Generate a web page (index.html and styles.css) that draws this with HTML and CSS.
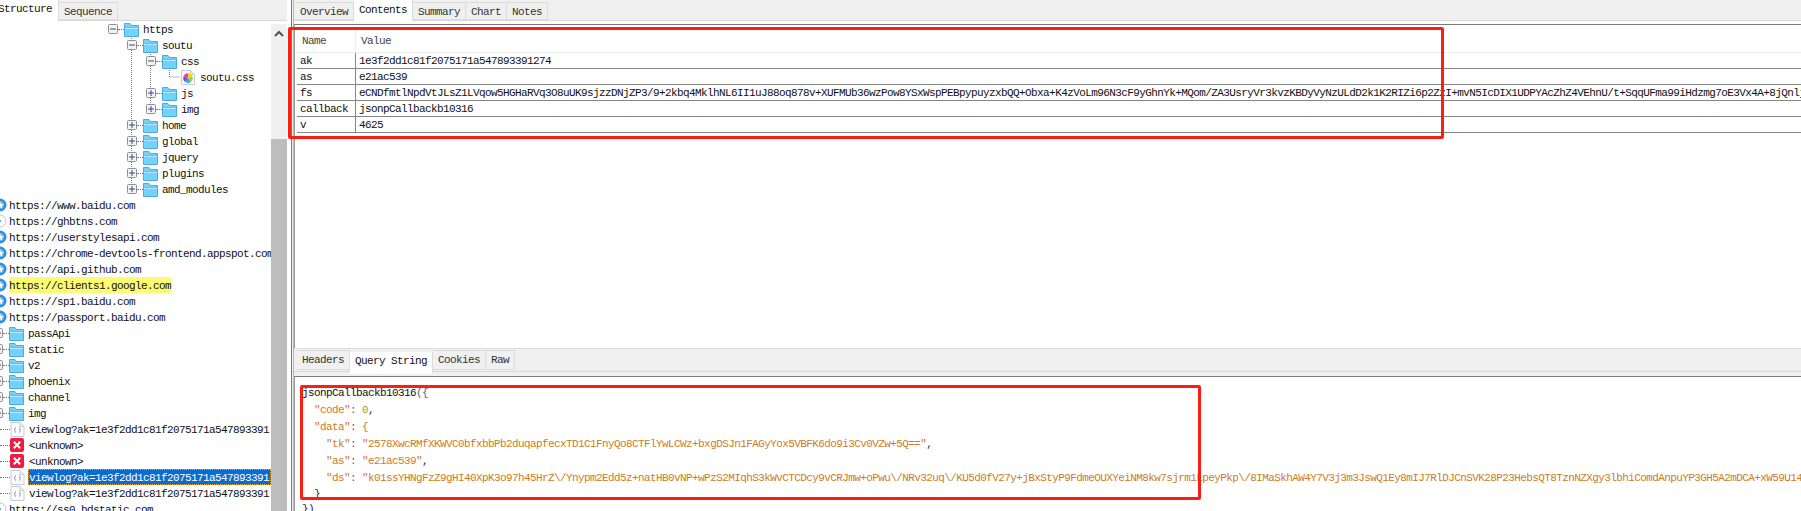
FILE: index.html
```html
<!DOCTYPE html>
<html lang="en">
<head>
<meta charset="utf-8">
<title>Charles session</title>
<link rel="stylesheet" href="styles.css">
</head>
<body>
<svg class="defs" width="0" height="0" aria-hidden="true">
  <symbol id="folder" viewBox="0 0 15 15"><path d="M.5 14.5V1.5h5.500l1.500 2h7v11z" fill="#72d2fb" stroke="#4cabdd"/><path d="M1 5.500h13" stroke="#4cabdd" stroke-opacity=".45"/><path d="M1 6.500h13" stroke="#b6e9ff"/></symbol>
  <symbol id="minus" viewBox="0 0 10 10"><rect x=".5" y=".5" width="9" height="9" rx="1" fill="#f4f4f4" stroke="#8f8f8f"/><path d="M2 5h6" stroke="#35507f"/></symbol>
  <symbol id="plus" viewBox="0 0 10 10"><rect x=".5" y=".5" width="9" height="9" rx="1" fill="#f4f4f4" stroke="#8f8f8f"/><path d="M2 5h6M5 2v6" stroke="#2d4a8a"/></symbol>
  <symbol id="globe" viewBox="0 0 14 14"><circle cx="7" cy="7" r="6.500" fill="#2b8fe6"/><circle cx="7" cy="7" r="4" fill="#6db9f4"/><path d="M7 3.200l1.100 2.500 2.700.2-2 1.800.6 2.700L7 9l-2.400 1.400.6-2.700-2-1.800 2.700-.2z" fill="#fff"/></symbol>
  <symbol id="globe-idle" viewBox="0 0 14 14"><circle cx="7" cy="7" r="6" fill="#fff" stroke="#bcc6d0"/><path d="M4 7h4" stroke="#2b8fe6" stroke-width="1.500"/></symbol>
  <symbol id="style" viewBox="0 0 14 15"><path d="M.5.5h9l4 4v10H.5z" fill="#fafafa" stroke="#c6cad4"/><path d="M9.500.5v4h4" fill="#e4e6ec" stroke="#c6cad4"/><path d="M7 8V3.200A4.800 4.800 0 0 1 11.500 6.500z" fill="#f7d21e"/><path d="M7 8l4.500-1.500A4.800 4.800 0 0 1 10 11.800z" fill="#9ad92a"/><path d="M7 8l3 3.800A4.800 4.800 0 0 1 4 11.800z" fill="#27b6dc"/><path d="M7 8l-3 3.800A4.800 4.800 0 0 1 2.500 6.500z" fill="#8d3fe0"/><path d="M7 8L2.500 6.500A4.800 4.800 0 0 1 7 3.200z" fill="#ef3fa0"/></symbol>
  <symbol id="page" viewBox="0 0 14 15"><path d="M.5.5h9l4 4v10H.5z" fill="#fbfbfd" stroke="#c8cbd6"/><path d="M9.500.5v4h4" fill="#e8eaf0" stroke="#c8cbd6"/><path d="M5.500 5.500c-1.500 0-.5 2.500-1.500 2.500 1 0 0 2.500 1.500 2.500M8.500 5.500c1.500 0 .5 2.500 1.500 2.500-1 0 0 2.500-1.500 2.500" fill="none" stroke="#8d93a3"/></symbol>
  <symbol id="error" viewBox="0 0 14 14"><rect width="14" height="14" rx="2" fill="#ee1c3e"/><path d="M3.800 3.800l6.400 6.400M10.200 3.800l-6.400 6.400" stroke="#fff" stroke-width="2"/></symbol>
</svg>

<div class="app">
  <aside class="left">
    <nav class="tabs left-tabs">
      <span class="tab tab-on tab-structure">Structure</span>
      <span class="tab">Sequence</span>
    </nav>
    <div class="left-body">
      <div class="tree">
        <svg class="guides" width="270" height="490" aria-hidden="true">
          <path d="M131.500 15V168M150.500 31V88M169.500 47V56H180" fill="none" stroke="#777" stroke-dasharray="1 1"/>
        </svg>
        <div class="rows">
          <div class="row d1"><svg class="exp"><use href="#minus"/></svg><i class="dots"></i><svg class="ic"><use href="#folder"/></svg><span class="t">https</span></div>
          <div class="row d2"><svg class="exp"><use href="#minus"/></svg><i class="dots"></i><svg class="ic"><use href="#folder"/></svg><span class="t">soutu</span></div>
          <div class="row d3"><svg class="exp"><use href="#minus"/></svg><i class="dots"></i><svg class="ic"><use href="#folder"/></svg><span class="t">css</span></div>
          <div class="row d4"><svg class="ic ic-file"><use href="#style"/></svg><span class="t t-file">soutu.css</span></div>
          <div class="row d3"><svg class="exp"><use href="#plus"/></svg><i class="dots"></i><svg class="ic"><use href="#folder"/></svg><span class="t">js</span></div>
          <div class="row d3"><svg class="exp"><use href="#plus"/></svg><i class="dots"></i><svg class="ic"><use href="#folder"/></svg><span class="t">img</span></div>
          <div class="row d2"><svg class="exp"><use href="#plus"/></svg><i class="dots"></i><svg class="ic"><use href="#folder"/></svg><span class="t">home</span></div>
          <div class="row d2"><svg class="exp"><use href="#plus"/></svg><i class="dots"></i><svg class="ic"><use href="#folder"/></svg><span class="t">global</span></div>
          <div class="row d2"><svg class="exp"><use href="#plus"/></svg><i class="dots"></i><svg class="ic"><use href="#folder"/></svg><span class="t">jquery</span></div>
          <div class="row d2"><svg class="exp"><use href="#plus"/></svg><i class="dots"></i><svg class="ic"><use href="#folder"/></svg><span class="t">plugins</span></div>
          <div class="row d2"><svg class="exp"><use href="#plus"/></svg><i class="dots"></i><svg class="ic"><use href="#folder"/></svg><span class="t">amd_modules</span></div>
          <div class="row"><svg class="ic-host"><use href="#globe"/></svg><span class="t">https://www.baidu.com</span></div>
          <div class="row"><svg class="ic-host"><use href="#globe-idle"/></svg><span class="t">https://ghbtns.com</span></div>
          <div class="row"><svg class="ic-host"><use href="#globe"/></svg><span class="t">https://userstylesapi.com</span></div>
          <div class="row"><svg class="ic-host"><use href="#globe"/></svg><span class="t">https://chrome-devtools-frontend.appspot.com</span></div>
          <div class="row"><svg class="ic-host"><use href="#globe"/></svg><span class="t">https://api.github.com</span></div>
          <div class="row"><svg class="ic-host"><use href="#globe"/></svg><span class="t t-mark">https://clients1.google.com</span></div>
          <div class="row"><svg class="ic-host"><use href="#globe"/></svg><span class="t">https://sp1.baidu.com</span></div>
          <div class="row"><svg class="ic-host"><use href="#globe"/></svg><span class="t">https://passport.baidu.com</span></div>
          <div class="row"><svg class="exp"><use href="#plus"/></svg><i class="dots"></i><svg class="ic"><use href="#folder"/></svg><span class="t">passApi</span></div>
          <div class="row"><svg class="exp"><use href="#plus"/></svg><i class="dots"></i><svg class="ic"><use href="#folder"/></svg><span class="t">static</span></div>
          <div class="row"><svg class="exp"><use href="#plus"/></svg><i class="dots"></i><svg class="ic"><use href="#folder"/></svg><span class="t">v2</span></div>
          <div class="row"><svg class="exp"><use href="#plus"/></svg><i class="dots"></i><svg class="ic"><use href="#folder"/></svg><span class="t">phoenix</span></div>
          <div class="row"><svg class="exp"><use href="#plus"/></svg><i class="dots"></i><svg class="ic"><use href="#folder"/></svg><span class="t">channel</span></div>
          <div class="row"><svg class="exp"><use href="#plus"/></svg><i class="dots"></i><svg class="ic"><use href="#folder"/></svg><span class="t">img</span></div>
          <div class="row leaf"><i class="dots"></i><svg class="ic"><use href="#page"/></svg><span class="t">viewlog?ak=1e3f2dd1c81f2075171a547893391</span></div>
          <div class="row leaf"><i class="dots"></i><svg class="ic ic-err"><use href="#error"/></svg><span class="t">&lt;unknown&gt;</span></div>
          <div class="row leaf"><i class="dots"></i><svg class="ic ic-err"><use href="#error"/></svg><span class="t">&lt;unknown&gt;</span></div>
          <div class="row leaf"><i class="dots"></i><svg class="ic"><use href="#page"/></svg><span class="t t-sel">viewlog?ak=1e3f2dd1c81f2075171a547893391</span></div>
          <div class="row leaf"><i class="dots"></i><svg class="ic"><use href="#page"/></svg><span class="t">viewlog?ak=1e3f2dd1c81f2075171a547893391</span></div>
          <div class="row"><svg class="ic-host"><use href="#globe-idle"/></svg><span class="t">https://ss0.bdstatic.com</span></div>
        </div>
      </div>
      <div class="scrollbar">
        <div class="track">
          <svg class="chev" width="10" height="7" aria-hidden="true"><path d="M1 6l4-4 4 4" fill="none" stroke="#555" stroke-width="2"/></svg>
        </div>
        <div class="thumb"></div>
      </div>
    </div>
  </aside>

  <div class="split"></div>

  <main class="right">
    <section class="pane-top">
      <nav class="tabs right-tabs">
        <span class="tab">Overview</span>
        <span class="tab tab-on">Contents</span>
        <span class="tab">Summary</span>
        <span class="tab">Chart</span>
        <span class="tab">Notes</span>
      </nav>
      <div class="sheet sheet-top">
        <table class="params">
          <colgroup><col class="col-name"><col></colgroup>
          <thead><tr><th>Name</th><th>Value</th></tr></thead>
          <tbody>
            <tr><td>ak</td><td>1e3f2dd1c81f2075171a547893391274</td></tr>
            <tr><td>as</td><td>e21ac539</td></tr>
            <tr><td>fs</td><td>eCNDfmtlNpdVtJLsZ1LVqow5HGHaRVq3O8uUK9sjzzDNjZP3/9+2kbq4MklhNL6II1uJ88oq878v+XUFMUb36wzPow8YSxWspPEBpypuyzxbQQ+Obxa+K4zVoLm96N3cF9yGhnYk+MQom/ZA3UsryVr3kvzKBDyVyNzULdD2k1K2RIZi6p2ZzI+mvN5IcDIX1UDPYAcZhZ4VEhnU/t+SqqUFma99iHdzmg7oE3Vx4A+8jQnlj</td></tr>
            <tr><td>callback</td><td>jsonpCallbackb10316</td></tr>
            <tr><td>v</td><td>4625</td></tr>
          </tbody>
        </table>
      </div>
    </section>

    <section class="pane-bottom">
      <nav class="tabs bottom-tabs">
        <span class="tab">Headers</span>
        <span class="tab tab-on">Query String</span>
        <span class="tab">Cookies</span>
        <span class="tab">Raw</span>
      </nav>
      <div class="sheet sheet-bottom">
        <div class="code">
          <div class="ln">jsonpCallbackb10316<span class="p">({</span></div>
          <div class="ln">  <span class="k">"code"</span><span class="p">:</span> <span class="n">0</span><span class="d">,</span></div>
          <div class="ln">  <span class="k">"data"</span><span class="p">:</span> <span class="k">{</span></div>
          <div class="ln">    <span class="k">"tk"</span><span class="p">:</span> <span class="k">"2578XwcRMfXKWVC0bfxbbPb2duqapfecxTD1C1FnyQo8CTFlYwLCWz+bxgDSJn1FAGyYox5VBFK6do9i3Cv0VZw+5Q=="</span><span class="d">,</span></div>
          <div class="ln">    <span class="k">"as"</span><span class="p">:</span> <span class="k">"e21ac539"</span><span class="d">,</span></div>
          <div class="ln">    <span class="k">"ds"</span><span class="p">:</span> <span class="k">"k01ssYHNgFzZ9gHI40XpK3o97h45HrZ\/Ynypm2Edd5z+natHB0vNP+wPzS2MIqhS3kWvCTCDcy9vCRJmw+oPwu\/NRv32uq\/KU5d0fV27y+jBxStyP9FdmeOUXYeiNM8kw7sjrm1LpeyPkp\/8IMaSkhAW4Y7V3j3m3JswQ1Ey8mIJ7RlDJCnSVK28P23HebsQT8TznNZXgy3lbhiComdAnpuYP3GH5A2mDCA+xW59U14</span></div>
          <div class="ln ln-tight">  <span class="d">}</span></div>
          <div class="ln ln-tight"><span class="d">})</span></div>
        </div>
      </div>
    </section>
  </main>

  <div class="mark mark-top"></div>
  <div class="mark mark-bottom"></div>
</div>
</body>
</html>
```

FILE: styles.css
```css
* { box-sizing: border-box; }

html, body {
  margin: 0;
  height: 511px;
  overflow: hidden;
  background: #fff;
}

body {
  font-family: "Liberation Mono", "Noto Sans CJK SC", monospace;
  font-size: 11px;
  letter-spacing: -0.6px;
  line-height: 16px;
  color: #111;
}

.defs { position: absolute; }

.app {
  position: relative;
  display: flex;
  width: 1801px;
  height: 511px;
  overflow: hidden;
}

/* ---------- tabs ---------- */
.tabs {
  display: flex;
  align-items: flex-start;
  background: #f0f0f0;
  border-bottom: 1px solid #d9d9d9;
  height: 21px;
  padding-top: 2px;
}

.tab {
  height: 18px;
  padding: 0 5px;
  line-height: 18px;
  color: #333;
  border: 1px solid #dcdcdc;
  border-left-width: 0;
  white-space: nowrap;
  flex: none;
}

.tab-on {
  height: 21px;
  margin-top: -2px;
  line-height: 20px;
  background: #fff;
  border-top-width: 0;
  border-bottom-width: 0;
  color: #111;
}

/* ---------- left pane ---------- */
.left {
  width: 291px;
  flex: none;
  display: flex;
  flex-direction: column;
}

.left-tabs { width: 287px; }

.tab-structure {
  margin-left: -2px;
  padding-left: 0;
  padding-right: 6px;
  line-height: 18px;
}

.left-body {
  display: flex;
  flex: 1;
  min-height: 0;
}

.tree {
  position: relative;
  width: 271px;
  flex: none;
  overflow: hidden;
  background: #fff;
}

.guides {
  position: absolute;
  left: 0;
  top: 0;
}

.rows {
  position: relative;
  margin-left: -7px;
}

.row {
  display: flex;
  align-items: center;
  height: 16px;
  white-space: nowrap;
}

.d1 { padding-left: 115px; }
.d2 { padding-left: 134px; }
.d3 { padding-left: 153px; }
.d4 { padding-left: 188px; }
.leaf { padding-left: 7px; }

.exp {
  width: 10px;
  height: 10px;
  flex: none;
}

.dots {
  width: 6px;
  height: 1px;
  flex: none;
  border-top: 1px dotted #777;
}

.leaf .dots { width: 10px; }

.ic {
  width: 15px;
  height: 15px;
  flex: none;
}

.ic-file { width: 14px; }
.ic-err { width: 14px; height: 14px; }

.ic-host {
  width: 14px;
  height: 14px;
  flex: none;
  margin-right: 2px;
}

.t {
  height: 16px;
  margin-left: 4px;
  line-height: 18px;
  color: #111;
}

.ic-host + .t { margin-left: 0; }
.ic-err + .t { margin-left: 5px; }
.t-file { margin-left: 5px; }

.t-mark {
  background: #fdfb72;
}

.t-sel {
  flex: 1;
  margin-left: 3px;
  padding-left: 1px;
  color: #fff;
  background: #0a6ccf;
  outline: 1px dotted #f2a13a;
  outline-offset: -1px;
}

.scrollbar {
  width: 16px;
  flex: none;
  display: flex;
  flex-direction: column;
  margin-top: 3px;
  background: #f0f0f0;
}

.track {
  height: 115px;
  flex: none;
  display: flex;
  justify-content: center;
  padding-top: 6px;
}

.chev { display: block; }

.thumb {
  flex: 1;
  background: #bdbdbd;
}

/* ---------- splitter ---------- */
.split {
  width: 3px;
  flex: none;
  background: #f0f0f0;
  border-left: 1px solid #7a7a7a;
  border-right: 1px solid #b8b8b8;
}

/* ---------- right pane ---------- */
.right {
  flex: 1;
  min-width: 0;
  display: flex;
  flex-direction: column;
}

.pane-top {
  height: 348px;
  flex: none;
  display: flex;
  flex-direction: column;
}

.right-tabs { padding-left: 1px; }

.sheet {
  flex: 1;
  min-height: 0;
  background: #fff;
  border-top: 1px solid #7a7a7a;
  border-left: 1px solid #9a9a9a;
  overflow: hidden;
}

.sheet-top {
  margin-top: 3px;
  padding: 4px 0 0 2px;
}

.pane-bottom {
  flex: 1;
  min-height: 0;
  display: flex;
  flex-direction: column;
  background: #f0f0f0;
}

.bottom-tabs {
  height: 24px;
  padding: 1px 0 0 3px;
  border-top: 1px solid #dcdcdc;
}

.bottom-tabs .tab {
  height: 20px;
  line-height: 18px;
}

.bottom-tabs .tab-on {
  height: 22px;
  margin-top: 2px;
  line-height: 19px;
}

.sheet-bottom {
  margin-top: 4px;
}

/* ---------- params table ---------- */
.params {
  width: 1504px;
  table-layout: fixed;
  border-collapse: separate;
  border-spacing: 0;
  font: inherit;
  letter-spacing: inherit;
}

.col-name { width: 58px; }

.params th {
  height: 24px;
  padding: 0 0 0 5px;
  font-weight: normal;
  text-align: left;
  color: #444;
  border-bottom: 1px solid #ececec;
}

.params th + th { border-left: 1px solid #ececec; }

.params td {
  height: 16px;
  padding: 2px 0 0 3px;
  line-height: 13px;
  white-space: nowrap;
  overflow: hidden;
  border-bottom: 1px solid #868686;
}

.params td + td {
  padding-left: 3px;
  border-left: 1px solid #868686;
}

/* ---------- code ---------- */
.code {
  padding: 8px 0 0 7px;
}

.ln {
  height: 17px;
  line-height: 17px;
  white-space: pre;
  color: #111;
}

.ln-tight {
  height: 15px;
  line-height: 15px;
}

.k { color: #d07a1c; }
.p { color: #5a6270; }
.n { color: #a89a10; }
.d { color: #1d2b50; }

/* ---------- red annotation boxes ---------- */
.mark {
  position: absolute;
  border: 3px solid #fb1f12;
  border-radius: 2px;
  pointer-events: none;
}

.mark-top {
  left: 288px;
  top: 27px;
  width: 1156px;
  height: 112px;
}

.mark-bottom {
  left: 300px;
  top: 385px;
  width: 901px;
  height: 115px;
}
```
